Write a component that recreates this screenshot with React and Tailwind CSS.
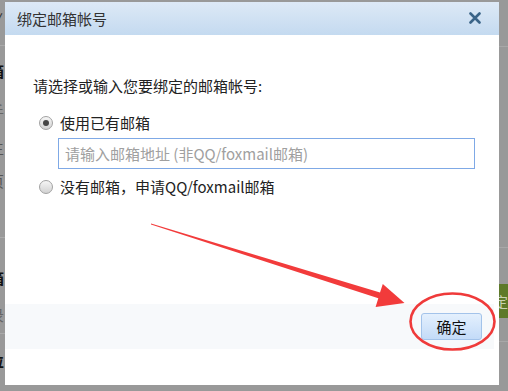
import React from "react";

const LEFT_ROWS = [
  { h: "h-[34px]", text: "∨", cls: "text-[#333]" },
  { h: "h-[11px]", text: "", cls: "" },
  { line: true },
  { h: "h-[48px]", text: "箱", cls: "text-[#111] font-bold" },
  { h: "h-[32px]", text: "手", cls: "text-[#666]" },
  { h: "h-[42px]", text: "主", cls: "text-[#555]" },
  { h: "h-[24px]", text: "页", cls: "text-[#555]" },
  { h: "h-[45px]", text: "", cls: "" },
  { line: true },
  { h: "h-[20px]", text: "", cls: "" },
  { h: "h-[38px]", text: "箱", cls: "text-[#111] font-bold" },
  { h: "h-[37px]", text: "录", cls: "text-[#666]" },
  { line: true },
  { h: "h-[52px]", text: "位", cls: "text-[#111] font-bold" },
];

const Radio = ({ checked }) => (
  <span className="flex h-[14px] w-[14px] items-center justify-center rounded-full border border-[#a2a2a2] bg-linear-to-b from-[#f6f6f6] to-[#d2d2d2]">
    {checked && <span className="h-[6px] w-[6px] rounded-full bg-[#454545]" />}
  </span>
);

export default function App() {
  return (
    <div className="relative h-[391px] w-[508px] overflow-hidden bg-[#999999] font-['Noto_Sans_CJK_SC',sans-serif]">
      {/* page behind the overlay */}
      <div className="flex h-full w-full justify-between">
        <div className="w-[5px] overflow-hidden">
          <div className="ml-[-11px] flex w-[16px] flex-col">
            {LEFT_ROWS.map((r, i) =>
              r.line ? (
                <div key={i} className="h-px w-full bg-[#aaaaaa]" />
              ) : (
                <div
                  key={i}
                  className={`${r.h} flex items-center text-[15px] leading-none ${r.cls}`}
                >
                  {r.text}
                </div>
              )
            )}
          </div>
        </div>
        <div className="w-[9px] overflow-hidden">
          <div className="flex flex-col">
            <div className="h-[46px]" />
            <div className="h-px bg-[#a8a8a8]" />
            <div className="h-[200px]" />
            <div className="h-px bg-[#a8a8a8]" />
            <div className="h-[36px]" />
            <div className="ml-[-5px] flex h-[34px] w-[20px] items-center bg-[#5e7a2a] text-[14px] leading-none text-[#c8d2b4]">
              定
            </div>
            <div className="h-[23px]" />
            <div className="h-px bg-[#a8a8a8]" />
          </div>
        </div>
      </div>

      {/* dialog */}
      <div className="absolute left-[5px] top-[2px] flex h-[383px] w-[494px] flex-col bg-white">
        <div className="flex h-[33px] shrink-0 items-center justify-between bg-linear-to-b from-[#dde9f6] to-[#c4daf0] pl-[12px] pr-[18px]">
          <span className="text-[15px] leading-[20px] text-[#333]">绑定邮箱帐号</span>
          <svg width="12" height="12" viewBox="0 0 12 12" className="mt-[-1px]">
            <path
              d="M1.5 1.5 L10.5 10.5 M10.5 1.5 L1.5 10.5"
              stroke="#3a6488"
              strokeWidth="2.6"
              strokeLinecap="round"
            />
          </svg>
        </div>

        <div className="flex flex-1 flex-col pl-[28px] pt-[41px] text-[15px] leading-[20px] text-[#222]">
          <p>请选择或输入您要绑定的邮箱帐号:</p>
          <div className="mt-[17px] flex items-center gap-[7px] pl-[6px]">
            <Radio checked />
            <span>使用已有邮箱</span>
          </div>
          <div className="ml-[25px] mt-[5px] flex h-[31px] w-[417px] items-center border border-[#7fa9e6] px-[6px] text-[#a0a0a0]">
            请输入邮箱地址 (非QQ/foxmail邮箱)
          </div>
          <div className="mt-[8px] flex items-center gap-[7px] pl-[6px]">
            <Radio />
            <span>没有邮箱，申请QQ/foxmail邮箱</span>
          </div>
        </div>

        <div className="mr-[5px] flex h-[45px] shrink-0 items-center justify-end bg-[#f7f9fb] pr-[12px]">
          <button className="flex h-[27px] w-[61px] items-center justify-center rounded-[3px] border border-[#a3c3ea] bg-linear-to-b from-[#e4f0fd] to-[#c3dbf8] text-[15px] leading-none text-[#111]">
            确定
          </button>
        </div>
        <div className="h-[36px] shrink-0" />
      </div>

      {/* red annotation */}
      <svg
        className="pointer-events-none absolute left-0 top-0"
        width="508"
        height="391"
        viewBox="0 0 508 391"
      >
        <polygon
          points="151,223.4 380,292.4 382.8,284 404.5,303 375.6,307 378.3,298.2 151,224.6"
          fill="#f23b3b"
        />
        <ellipse
          cx="452.5"
          cy="321.5"
          rx="42"
          ry="28"
          fill="none"
          stroke="#ef3a3a"
          strokeWidth="2.6"
        />
      </svg>
    </div>
  );
}
